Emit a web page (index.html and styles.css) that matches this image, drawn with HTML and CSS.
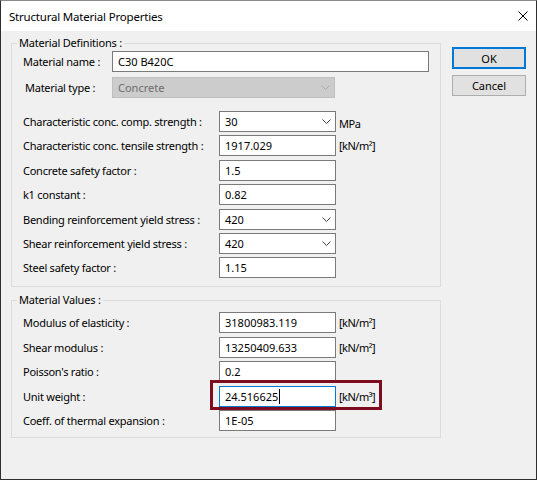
FILE: index.html
```html
<!DOCTYPE html>
<html lang="en">

<head>
  <meta charset="UTF-8" />
  <title>Structural Material Properties</title>
  <link rel="stylesheet" href="styles.css">
</head>

<body>
  <div class="window">
    <div class="titlebar">
      <span class="title">Structural Material Properties</span>
      <svg class="close" viewBox="0 0 10 10"><path d="M0.5 0.5 L9.5 9.5 M9.5 0.5 L0.5 9.5" stroke="#000" stroke-width="1" fill="none"/></svg>
    </div>

    <div class="content">
      <div class="groups">
        <fieldset class="group group-defs">
          <legend>Material Definitions :</legend>
          <div class="row">
            <label>Material name :</label>
            <div class="field name-field">C30 B420C</div>
          </div>
          <div class="row row-type">
            <label class="type-label">Material type :</label>
            <div class="field combo disabled type-field">Concrete
              <svg class="chev" viewBox="0 0 9 5"><polyline points="0.5,0.5 4.5,4.5 8.5,0.5" fill="none" stroke="#a8a8a8"/></svg>
            </div>
          </div>

          <div class="grid">
            <label>Characteristic conc. comp. strength :</label>
            <div class="field combo">30
              <svg class="chev" viewBox="0 0 9 5"><polyline points="0.5,0.5 4.5,4.5 8.5,0.5" fill="none" stroke="#404040"/></svg>
            </div>
            <span class="unit mpa">MPa</span>

            <label>Characteristic conc. tensile strength :</label>
            <div class="field">1917.029</div>
            <span class="unit">[kN/m²]</span>

            <label>Concrete safety factor :</label>
            <div class="field">1.5</div>
            <span></span>

            <label>k1 constant :</label>
            <div class="field">0.82</div>
            <span></span>

            <label>Bending reinforcement yield stress :</label>
            <div class="field combo">420
              <svg class="chev" viewBox="0 0 9 5"><polyline points="0.5,0.5 4.5,4.5 8.5,0.5" fill="none" stroke="#404040"/></svg>
            </div>
            <span></span>

            <label>Shear reinforcement yield stress :</label>
            <div class="field combo">420
              <svg class="chev" viewBox="0 0 9 5"><polyline points="0.5,0.5 4.5,4.5 8.5,0.5" fill="none" stroke="#404040"/></svg>
            </div>
            <span></span>

            <label>Steel safety factor :</label>
            <div class="field">1.15</div>
            <span></span>
          </div>
        </fieldset>

        <fieldset class="group group-values">
          <legend>Material Values :</legend>
          <div class="grid">
            <label>Modulus of elasticity :</label>
            <div class="field">31800983.119</div>
            <span class="unit">[kN/m²]</span>

            <label>Shear modulus :</label>
            <div class="field">13250409.633</div>
            <span class="unit">[kN/m²]</span>

            <label>Poisson's ratio :</label>
            <div class="field">0.2</div>
            <span></span>

            <label>Unit weight :</label>
            <div class="field focused">24.516625<span class="caret"></span>
              <div class="highlight"></div>
            </div>
            <span class="unit">[kN/m³]</span>

            <label>Coeff. of thermal expansion :</label>
            <div class="field">1E-05</div>
            <span></span>
          </div>
        </fieldset>
      </div>

      <div class="buttons">
        <div class="btn btn-default">OK</div>
        <div class="btn">Cancel</div>
      </div>
    </div>
  </div>
</body>

</html>
```

FILE: styles.css
```css
* {
  margin: 0;
  padding: 0;
  box-sizing: border-box;
}

body {
  width: 537px;
  height: 480px;
  overflow: hidden;
  font-family: "Noto Sans", "Open Sans", sans-serif;
  font-size: 11px;
  color: #000;
  background: #f0f0f0;
}

.window {
  width: 537px;
  height: 480px;
  border: 1px solid #2e2e2e;
  border-top-color: #8a8a8a;
  background: #f0f0f0;
  display: flex;
  flex-direction: column;
}

/* Title bar */
.titlebar {
  height: 30px;
  flex-shrink: 0;
  background: #fff;
  display: flex;
  align-items: center;
  padding-left: 8px;
}

.title {
  flex: 1;
  font-size: 11.5px;
  letter-spacing: -0.2px;
}

.close {
  width: 10px;
  height: 10px;
  margin-right: 8px;
}

/* Body */
.content {
  display: flex;
  padding: 4px 0 0 10px;
}

.groups {
  width: 430px;
}

.group {
  border: 1px solid #dcdcdc;
  padding: 0 11px 8px;
}

.group legend {
  margin-left: -6px;
  padding: 0 2px;
  line-height: 16px;
  letter-spacing: -0.2px;
}

.group-values {
  margin-top: 5px;
  padding-top: 4px;
  padding-bottom: 6px;
}

label {
  white-space: nowrap;
  letter-spacing: -0.25px;
}

.row {
  display: flex;
  align-items: center;
  height: 21px;
}

.row label {
  width: 89px;
}

.row-type {
  margin-top: 5px;
}

.type-label {
  padding-left: 2px;
}

.grid {
  display: grid;
  grid-template-columns: 196px 117px auto;
  grid-auto-rows: 21px;
  row-gap: 3.4px;
  align-items: center;
  margin-top: 13px;
}

.group-values .grid {
  margin-top: 0;
  row-gap: 3.5px;
}

/* Fields */
.field {
  position: relative;
  height: 21px;
  border: 1px solid #7a7a7a;
  background: #fff;
  padding-left: 5px;
  display: flex;
  align-items: center;
  white-space: nowrap;
}

.name-field {
  width: 317px;
}

.type-field {
  width: 223px;
}

.combo {
  justify-content: space-between;
  padding-right: 4px;
}

.chev {
  width: 9px;
  height: 5px;
}

.disabled {
  background: #cccccc;
  border-color: #bfbfbf;
  color: #6d6d6d;
}

.focused {
  border-color: #0078d7;
}

.caret {
  display: inline-block;
  width: 1px;
  height: 15px;
  background: #000;
  margin-left: 1px;
}

.highlight {
  position: absolute;
  left: -10px;
  top: -7px;
  width: 172px;
  height: 30px;
  border: 3px solid #7d0c1f;
}

.unit {
  padding-left: 3px;
  white-space: nowrap;
  letter-spacing: -0.5px;
}

.mpa {
  padding-top: 3px;
}

/* Buttons */
.buttons {
  margin-left: 11px;
  padding-top: 12px;
  display: flex;
  flex-direction: column;
  gap: 6px;
}

.btn {
  width: 74px;
  height: 21px;
  background: #e1e1e1;
  border: 1px solid #adadad;
  display: flex;
  align-items: center;
  justify-content: center;
}

.btn-default {
  height: 22px;
  border: 2px solid #0078d7;
}
```
